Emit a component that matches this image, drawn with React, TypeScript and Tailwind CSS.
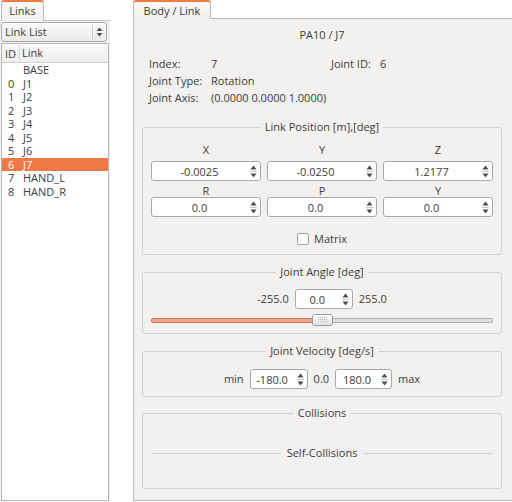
import React from 'react';

const links = [
  { id: '', name: 'BASE' },
  { id: '0', name: 'J1' },
  { id: '1', name: 'J2' },
  { id: '2', name: 'J3' },
  { id: '3', name: 'J4' },
  { id: '4', name: 'J5' },
  { id: '5', name: 'J6' },
  { id: '6', name: 'J7' },
  { id: '7', name: 'HAND_L' },
  { id: '8', name: 'HAND_R' },
];

function Spin({ value, className = '' }: { value: string; className?: string }) {
  return (
    <div className={`flex h-[20px] rounded-[3px] border border-[#a9a8a7] bg-white ${className}`}>
      <div className="flex flex-1 items-center justify-center leading-none">{value}</div>
      <div className="flex w-[13px] items-center justify-center">
        <svg width="7" height="14" viewBox="0 0 7 14">
          <path d="M3.5 1.5 L6.5 5.5 L0.5 5.5Z" fill="#4d4d4d" />
          <line x1="0" y1="7.5" x2="7" y2="7.5" stroke="#c4c3c2" />
          <path d="M0.5 9.5 L6.5 9.5 L3.5 13.5Z" fill="#4d4d4d" />
        </svg>
      </div>
    </div>
  );
}

function Group({ title, className = '', children }: { title: string; className?: string; children?: React.ReactNode }) {
  return (
    <fieldset className={`rounded-[3px] border border-[#d4d3d2] ${className}`}>
      <legend className="mx-auto px-[4px] leading-[14px]">{title}</legend>
      {children}
    </fieldset>
  );
}

export default function App() {
  return (
    <div className="flex h-[502px] w-[512px] overflow-hidden bg-white pb-[1px] font-['Open_Sans',sans-serif] text-[11px] text-[#3c3c3c]">
      {/* Links dock */}
      <div className="flex w-[110px] shrink-0 flex-col">
        <div className="relative z-10 -mb-px ml-[1px] flex h-[21px] w-[43px] items-center justify-center rounded-t-[3px] border border-b-0 border-t-2 border-[#b9b8b7] border-t-[#f07746] bg-linear-to-b from-[#f8f7f6] to-[#f2f1f0]">
          Links
        </div>
        <div className="flex flex-1 flex-col border-t border-[#c3c2c1] bg-[#f2f1f0]">
          <div className="ml-[1px] mt-[1px] flex h-[20px] w-[106px] items-center rounded-[3px] border border-[#aaa9a8] bg-linear-to-b from-[#fbfbfb] to-[#ebeae9]">
            <span className="flex-1 pl-[3px]">Link List</span>
            <div className="flex h-[14px] w-[14px] items-center justify-center border-l border-[#cfcecd]">
              <svg width="7" height="10" viewBox="0 0 7 10">
                <path d="M3.5 0.5 L6.5 4 L0.5 4Z" fill="#4d4d4d" />
                <path d="M0.5 6 L6.5 6 L3.5 9.5Z" fill="#4d4d4d" />
              </svg>
            </div>
          </div>
          <div className="ml-[1px] mt-[1px] flex w-[108px] flex-1 flex-col border border-[#b8b7b6] bg-white">
            <div className="flex h-[19px] items-center border-b border-[#d3d2d1] bg-linear-to-b from-[#fafafa] to-[#eeedec]">
              <div className="w-[18px] border-r border-[#d3d2d1] pl-[3px] leading-[17px]">ID</div>
              <div className="pl-[2px]">Link</div>
            </div>
            {links.map((l) => (
              <div
                key={l.name}
                className={`flex h-[13.5px] items-center leading-[13.5px] ${l.name === 'J7' ? 'bg-[#f07746] text-white' : ''}`}
              >
                <div className="w-[18px] pl-[6px]">{l.id}</div>
                <div className="pl-[3px]">{l.name}</div>
              </div>
            ))}
          </div>
        </div>
      </div>

      {/* Body / Link panel */}
      <div className="ml-[23px] flex w-[380px] shrink-0 flex-col">
        <div className="relative z-10 -mb-px flex h-[19px] w-[78px] items-center justify-center rounded-t-[3px] border border-b-0 border-t-2 border-[#b9b8b7] border-t-[#f07746] bg-linear-to-b from-[#f8f7f6] to-[#f2f1f0] pt-[1px]">
          Body / Link
        </div>
        <div className="flex-1 border border-[#b9b8b7] bg-[#f2f1f0] pl-[8px] pr-[10px] pt-[9px]">
          <div className="text-center leading-[14px]">PA10 / J7</div>

          <div className="mt-[13px] grid grid-cols-[62px_120px_49px_1fr] pl-[7px] leading-[17px]">
            <div>Index:</div>
            <div>7</div>
            <div>Joint ID:</div>
            <div>6</div>
            <div>Joint Type:</div>
            <div className="col-span-3">Rotation</div>
            <div>Joint Axis:</div>
            <div className="col-span-3">(0.0000 0.0000 1.0000)</div>
          </div>

          <Group title="Link Position [m],[deg]" className="mt-[14px]">
            <div className="grid grid-cols-3 gap-x-[6px] px-[8px] pt-[9px]">
              <div className="h-[14px] text-center leading-[14px]">X</div>
              <div className="h-[14px] text-center leading-[14px]">Y</div>
              <div className="h-[14px] text-center leading-[14px]">Z</div>
              <Spin value="-0.0025" className="mt-[4px]" />
              <Spin value="-0.0250" className="mt-[4px]" />
              <Spin value="1.2177" className="mt-[4px]" />
              <div className="mt-[4px] h-[12px] text-center leading-[12px]">R</div>
              <div className="mt-[4px] h-[12px] text-center leading-[12px]">P</div>
              <div className="mt-[4px] h-[12px] text-center leading-[12px]">Y</div>
              <Spin value="0.0" />
              <Spin value="0.0" />
              <Spin value="0.0" />
            </div>
            <div className="mt-[16px] flex h-[12px] items-center justify-center gap-[5px] pb-0">
              <div className="h-[12px] w-[12px] rounded-[2px] border border-[#a3a2a1] bg-white" />
              <span className="leading-[12px]">Matrix</span>
            </div>
            <div className="h-[9px]" />
          </Group>

          <Group title="Joint Angle [deg]" className="mt-[10px]">
            <div className="mt-[10px] flex items-center justify-center gap-[6px]">
              <span>-255.0</span>
              <Spin value="0.0" className="w-[58px]" />
              <span>255.0</span>
            </div>
            <div className="mt-[5px] flex h-[12px] items-center px-[8px]">
              <div className="h-[5px] flex-1 rounded-l-[2px] border border-[#c57c60] bg-[#eda487]" />
              <div className="relative z-10 -mx-px flex h-[12px] w-[21px] items-center justify-center rounded-[3px] border border-[#9c9b9a] bg-linear-to-b from-white to-[#e2e1e0]">
                <svg width="9" height="6" viewBox="0 0 9 6">
                  {[0, 2, 4].map((y) =>
                    [0, 2, 4, 6, 8].map((x) => (
                      <rect key={`${x}-${y}`} x={x} y={y} width="1" height="1" fill="#b5b4b3" />
                    )),
                  )}
                </svg>
              </div>
              <div className="h-[5px] flex-1 rounded-r-[2px] border border-[#b3b2b1] bg-[#dddcdb]" />
            </div>
            <div className="h-[7px]" />
          </Group>

          <Group title="Joint Velocity [deg/s]" className="mt-[10px]">
            <div className="mt-[11px] flex items-center justify-center gap-[6px]">
              <span>min</span>
              <Spin value="-180.0" className="w-[58px]" />
              <span>0.0</span>
              <Spin value="180.0" className="w-[57px]" />
              <span>max</span>
            </div>
            <div className="h-[7px]" />
          </Group>

          <Group title="Collisions" className="mt-[9px]">
            <div className="mt-[26px] flex h-[14px] items-center px-[8px]">
              <div className="h-px flex-1 bg-[#d4d3d2]" />
              <span className="px-[6px] leading-[14px]">Self-Collisions</span>
              <div className="h-px flex-1 bg-[#d4d3d2]" />
            </div>
            <div className="h-[28px]" />
          </Group>
        </div>
      </div>
    </div>
  );
}
